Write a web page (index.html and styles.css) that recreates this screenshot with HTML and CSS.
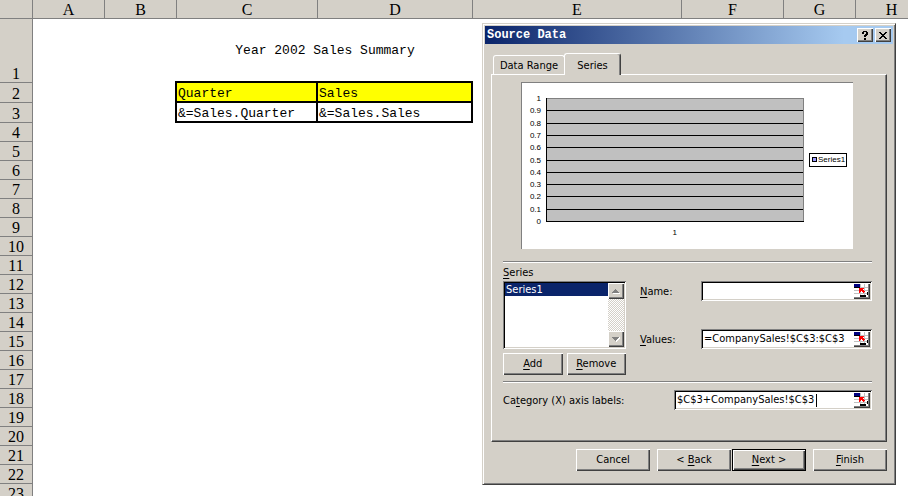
FILE: index.html
```html
<!DOCTYPE html>
<html lang="en">
<head>
<meta charset="utf-8">
<title>Year 2002 Sales Summary</title>
<link rel="stylesheet" href="styles.css">
</head>
<body>
<svg width="0" height="0" class="defs" aria-hidden="true">
  <symbol id="picker" viewBox="0 0 14 13" shape-rendering="crispEdges">
    <path fill="#fff" d="M0 0h14v13H0z"/>
    <path fill="#c0c0c0" d="M0 3h14v1H0zM0 6h14v1H0zM0 9h14v1H0zM6 0h1v12H6zM10 0h1v12h-1z"/>
    <path fill="#000080" d="M0 0h6v3H0z"/>
    <path fill="#000" d="M0 3h6v1H0zM6 11h6v2H6zM13 8h1v3h-1z"/>
    <path fill="#f00" d="M5 4h5v1H9v1h1v1h1v1h-1v1H9V8H8V7H7v1H6v1H5z"/>
  </symbol>
</svg>
<main class="sheet">
  <table>
    <colgroup><col class="w-head"><col class="w-std"><col class="w-std"><col class="w-c"><col class="w-d"><col class="w-e"><col class="w-f"><col class="w-std"><col></colgroup>
    <thead>
      <tr><th></th><th>A</th><th>B</th><th>C</th><th>D</th><th>E</th><th>F</th><th>G</th><th>H</th></tr>
    </thead>
    <tbody>
      <tr class="tall"><th>1</th><td></td><td></td><td colspan="2" class="title">Year 2002 Sales Summary</td><td colspan="4"></td></tr>
      <tr class="mid"><th>2</th><td></td><td></td><td class="box key">Quarter</td><td class="box key">Sales</td><td colspan="4"></td></tr>
      <tr class="mid"><th>3</th><td></td><td></td><td class="box">&amp;=Sales.Quarter</td><td class="box">&amp;=Sales.Sales</td><td colspan="4"></td></tr>
      <tr><th>4</th><td colspan="8"></td></tr>
      <tr><th>5</th><td colspan="8"></td></tr>
      <tr><th>6</th><td colspan="8"></td></tr>
      <tr><th>7</th><td colspan="8"></td></tr>
      <tr><th>8</th><td colspan="8"></td></tr>
      <tr><th>9</th><td colspan="8"></td></tr>
      <tr><th>10</th><td colspan="8"></td></tr>
      <tr><th>11</th><td colspan="8"></td></tr>
      <tr><th>12</th><td colspan="8"></td></tr>
      <tr><th>13</th><td colspan="8"></td></tr>
      <tr><th>14</th><td colspan="8"></td></tr>
      <tr><th>15</th><td colspan="8"></td></tr>
      <tr><th>16</th><td colspan="8"></td></tr>
      <tr><th>17</th><td colspan="8"></td></tr>
      <tr><th>18</th><td colspan="8"></td></tr>
      <tr><th>19</th><td colspan="8"></td></tr>
      <tr><th>20</th><td colspan="8"></td></tr>
      <tr><th>21</th><td colspan="8"></td></tr>
      <tr><th>22</th><td colspan="8"></td></tr>
      <tr><th>23</th><td colspan="8"></td></tr>
    </tbody>
  </table>
</main>

<section class="dialog" role="dialog" aria-labelledby="dlg-title">
  <header class="titlebar">
    <h1 id="dlg-title">Source Data</h1>
    <button class="tb" type="button" aria-label="Help"><svg width="8" height="9" viewBox="0 0 8 9" shape-rendering="crispEdges"><path d="M2 0h4v1h1v3H6v1H5v1H3V4h1V3h1V1H3v2H1V1h1zM3 7h2v2H3z"/></svg></button>
    <button class="tb" type="button" aria-label="Close"><svg width="8" height="7" viewBox="0 0 8 7" shape-rendering="crispEdges"><path d="M0 0h2v1h1v1h2V1h1V0h2v1H7v1H6v1H5v1h1v1h1v1h1v1H6V6H5V5H3v1H2v1H0V6h1V5h1V4h1V3H2V2H1V1H0z"/></svg></button>
  </header>

  <div class="tabs" role="tablist">
    <button class="tab" type="button" role="tab">Data Range</button>
    <button class="tab active" type="button" role="tab" aria-selected="true">Series</button>
  </div>

  <form class="panel">
    <div class="chart">
      <svg width="331" height="166" viewBox="0 0 331 166" role="img" aria-label="Chart preview" shape-rendering="crispEdges">
        <path fill="#c0c0c0" d="M24 15h258v124H24z"/>
        <path fill="#808080" d="M24 15h258v1H24zM281 15h1v123h-1z"/>
        <path d="M24 15h1v124h-1zM24 27h257v1H24zM24 40h257v1H24zM24 52h257v1H24zM24 64h257v1H24zM24 77h257v1H24zM24 89h257v1H24zM24 101h257v1H24zM24 113h257v1H24zM24 126h257v1H24zM24 138h258v1H24z"/>
        <g class="axis">
          <text x="19" y="18">1</text><text x="19" y="30">0.9</text><text x="19" y="43">0.8</text><text x="19" y="55">0.7</text><text x="19" y="67">0.6</text><text x="19" y="80">0.5</text><text x="19" y="92">0.4</text><text x="19" y="104">0.3</text><text x="19" y="116">0.2</text><text x="19" y="129">0.1</text><text x="19" y="141">0</text><text x="155" y="152">1</text>
        </g>
        <path d="M287 70h38v14h-38z"/><path fill="#fff" d="M288 71h36v12h-36z"/>
        <path d="M290 74h5v5h-5z"/><path fill="#99f" d="M291 75h3v3h-3z"/>
        <text class="legend" x="296" y="79">Series1</text>
      </svg>
    </div>
    <hr>
    <div class="columns">
      <div class="series">
        <label for="series"><u>S</u>eries</label>
        <div class="list">
          <select id="series" size="5"><option selected>Series1</option></select>
          <div class="scroll">
            <button type="button" aria-label="Scroll up"><svg width="8" height="5" viewBox="0 0 8 5" shape-rendering="crispEdges"><path fill="#fff" d="M1 4h7v1H1z"/><path fill="#808080" d="M3 0h1v1h1v1h1v1h1v1H0V3h1V2h1V1h1z"/></svg></button>
            <button type="button" aria-label="Scroll down"><svg width="8" height="5" viewBox="0 0 8 5" shape-rendering="crispEdges"><path fill="#fff" d="M7 0h1v2H7v1H6v1H5v1H4V4z"/><path fill="#808080" d="M0 0h7v1H6v1H5v1H4v1H3V3H2V2H1V1H0z"/></svg></button>
          </div>
        </div>
        <div class="pair">
          <button class="btn" type="button"><span><u>A</u>dd</span></button>
          <button class="btn" type="button"><span><u>R</u>emove</span></button>
        </div>
      </div>
      <div class="fields">
        <div class="field"><label for="name"><u>N</u>ame:</label>
          <div class="entry"><input id="name" type="text"><button class="pick" type="button" aria-label="Select name range"><svg width="14" height="13"><use href="#picker"/></svg></button></div></div>
        <div class="field"><label for="values"><u>V</u>alues:</label>
          <div class="entry"><input id="values" type="text" value="=CompanySales!$C$3:$C$3"><button class="pick" type="button" aria-label="Select values range"><svg width="14" height="13"><use href="#picker"/></svg></button></div></div>
      </div>
    </div>
    <hr>
    <div class="field category"><label for="cat">Ca<u>t</u>egory (X) axis labels:</label>
      <div class="entry caret"><input id="cat" type="text" value="$C$3+CompanySales!$C$3"><button class="pick" type="button" aria-label="Select category range"><svg width="14" height="13"><use href="#picker"/></svg></button></div></div>
  </form>

  <footer class="actions">
    <button class="btn" type="button">Cancel</button>
    <div class="steps">
      <button class="btn" type="button"><span>&lt; <u>B</u>ack</span></button>
      <button class="btn default" type="button"><span><u>N</u>ext &gt;</span></button>
    </div>
    <button class="btn" type="button"><span><u>F</u>inish</span></button>
  </footer>
</section>
</body>
</html>
```
FILE: styles.css
```css
:root {
  --face: #d4d0c8;
  --light: #fff;
  --shade: #808080;
  --dark: #404040;
}

* { box-sizing: border-box; }

body {
  margin: 0;
  height: 100vh;
  overflow: hidden;
  background: #fff;
  color: #000;
  font: 11px/16px "DejaVu Sans Condensed", "Noto Sans", sans-serif;
}

.defs { position: absolute; }

button, input, select {
  margin: 0;
  padding: 0;
  border: 0;
  border-radius: 0;
  font: inherit;
  color: inherit;
  background: var(--face);
}

button {
  display: flex;
  align-items: center;
  justify-content: center;
}

u { text-underline-offset: 2px; }

/* Worksheet: the last column runs past the window edge */
table {
  width: calc(100% + 20px);
  table-layout: fixed;
  border-collapse: separate;
  border-spacing: 0;
}

.w-head { width: 33px; }
.w-std { width: 72px; }
.w-c { width: 141px; }
.w-d { width: 155px; }
.w-e { width: 209px; }
.w-f { width: 102px; }

th, td { height: 19px; padding: 0; overflow: hidden; white-space: nowrap; }

th {
  padding-top: 2px;
  border: solid var(--shade);
  border-width: 0 1px 1px 0;
  background: var(--face);
  font: 16px/16px "Liberation Serif", serif;
  vertical-align: bottom;
}

td { font: 13px/16px "Liberation Mono", monospace; }

.tall > * { height: 64px; }
.mid > * { height: 20px; }
.title { text-align: center; }

.box {
  padding: 3px 0 0 1px;
  border: solid #000;
  border-width: 0 2px 2px 0;
  box-shadow: -2px -2px #000, 0 -2px #000, -2px 0 #000;
  line-height: 15px;
}

.key { background: #ff0; }

/* Dialog */
.dialog {
  position: absolute;
  left: 482px;
  top: 23px;
  width: 414px;
  padding: 1px;
  border: 1px solid;
  border-color: var(--face) var(--dark) var(--dark) var(--face);
  background: var(--face);
  box-shadow: inset 1px 1px var(--light), inset -1px -1px var(--shade);
}

.titlebar {
  display: flex;
  align-items: center;
  gap: 2px;
  height: 18px;
  margin: 1px;
  padding: 0 2px;
  background: linear-gradient(90deg, #0a246a, #a6caf0 88%);
}

.titlebar h1 {
  flex: 1;
  margin: 0;
  color: #fff;
  font: bold 12px/18px "Liberation Mono", monospace;
}

.tb, .btn, .pick, .scroll button {
  box-shadow: inset 1px 1px var(--light), inset -1px -1px var(--dark), inset -2px -2px var(--shade);
}

.tb { width: 16px; height: 14px; }

.tabs {
  display: flex;
  align-items: flex-end;
  margin: 9px 9px 0;
}

.tab {
  width: 72px;
  height: 19px;
  padding-top: 2px;
  border: 1px solid var(--light);
  border-bottom: 0;
  border-radius: 3px 3px 0 0;
}

.tab.active {
  position: relative;
  width: 57px;
  height: 22px;
  margin: 0 0 -1px -1px;
  border-right-color: var(--dark);
  box-shadow: inset -1px 0 var(--shade);
}

.panel {
  margin: 0 7px;
  padding: 7px 14px 31px 11px;
  border: 1px solid;
  border-color: var(--light) var(--dark) var(--dark) var(--light);
  box-shadow: inset -1px -1px var(--shade);
}

.chart {
  display: flex;
  margin: 0 19px 0 18px;
  border: solid var(--shade);
  border-width: 1px 0 0 1px;
  background: #fff;
}

.axis, .legend { font: 8px "Liberation Sans", sans-serif; }
.axis { text-anchor: end; }

hr {
  height: 2px;
  margin: 12px 0 0;
  border: solid;
  border-width: 1px 0;
  border-color: var(--shade) transparent var(--light);
}

.columns {
  display: grid;
  grid-template-columns: 123px minmax(0, 1fr);
  gap: 14px;
  padding-top: 2px;
}

.columns + hr { margin-top: 6px; }

.series { display: flex; flex-direction: column; }

.list {
  display: flex;
  height: 68px;
  margin-bottom: 4px;
}

.list, .entry {
  padding: 2px;
  background: #fff;
  box-shadow: inset 1px 1px var(--shade), inset -1px -1px var(--light), inset 2px 2px #000, inset -2px -2px var(--face);
}

select {
  flex: 1;
  min-width: 0;
  height: 64px;
  background: #fff;
  overflow: hidden;
  outline: 0;
}

option {
  min-height: 13px;
  padding: 0 1px;
  line-height: 13px;
}

option:checked {
  color: #fff;
  background: #0a246a linear-gradient(#0a246a, #0a246a);
}

.scroll {
  display: flex;
  flex-direction: column;
  justify-content: space-between;
  width: 16px;
  background: repeating-conic-gradient(#fff 0 25%, var(--face) 0 50%) 0 0 / 2px 2px;
}

.scroll button { height: 16px; }

.pair { display: grid; grid-template-columns: 1fr 1fr; gap: 4px; }

.btn { height: 22px; }

.fields {
  display: grid;
  grid-template-columns: minmax(0, 1fr);
  align-content: start;
  gap: 28px;
  padding-top: 16px;
}

.field { display: flex; align-items: center; }
.field label { width: 61px; padding-top: 2px; }

.entry {
  flex: 1;
  display: flex;
  align-items: center;
  min-width: 0;
  height: 20px;
}

.entry input {
  flex: 1;
  min-width: 0;
  height: 16px;
  padding-left: 1px;
  background: none;
  outline: 0;
}

.pick {
  justify-content: flex-start;
  align-items: flex-start;
  width: 17px;
  height: 16px;
  padding: 1px;
}

.category { margin-top: 7px; }
.category label { width: 171px; }

/* Text cursor of the focused field */
.caret { position: relative; }

.caret::after {
  content: "";
  position: absolute;
  left: 142px;
  top: 4px;
  width: 1px;
  height: 13px;
  background: #000;
}

.actions {
  display: flex;
  justify-content: flex-end;
  gap: 7px;
  margin: 7px 7px 12px;
}

.actions .btn { width: 74px; }
.steps { display: flex; gap: 1px; }

.btn.default {
  border: 1px solid #000;
}
```
